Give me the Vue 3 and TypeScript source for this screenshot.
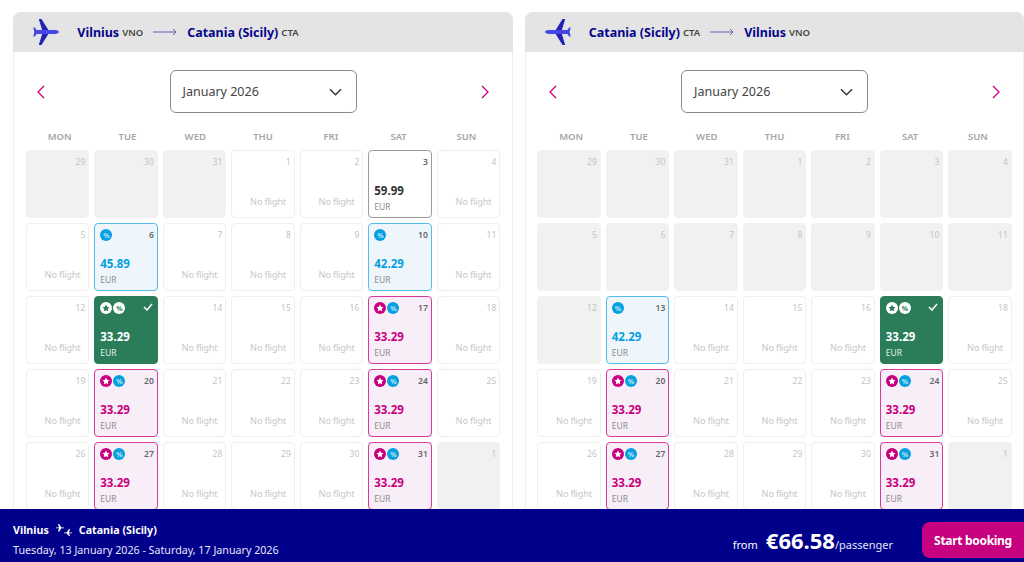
<template>
  <div class="page">
    <main class="panels">
      <section v-for="(panel, p) in panels" :key="p" class="panel">
        <header class="panel-head">
          <svg class="plane" :class="{ flip: panel.flip }" viewBox="0 0 28 28" width="28" height="28">
            <path d="M6.800 1h2.700l7 11.300v3.400L9.500 27H6.800l3.400-11.300v-3.400z" fill="#2222b8" />
            <path d="M27 14c0 1-2 1.900-4 1.900H4.600L2.800 18.500H1.300l1-4.500-1-4.500h1.500l1.800 2.600H23c2 0 4 .9 4 1.900z" fill="#4646e4" />
          </svg>
          <span class="city">{{ panel.from }}</span>
          <span class="code">{{ panel.fromCode }}</span>
          <svg class="route-arrow" viewBox="0 0 24 8" width="24" height="8">
            <path d="M0 4h23M20 1l3 3-3 3" fill="none" stroke="#5f5fb0" stroke-width="1" />
          </svg>
          <span class="city">{{ panel.to }}</span>
          <span class="code">{{ panel.toCode }}</span>
        </header>

        <div class="month-nav">
          <svg viewBox="0 0 8 14" width="8" height="14">
            <path d="M7 1L1 7l6 6" fill="none" stroke="#c6007e" stroke-width="1.300" />
          </svg>
          <div class="month-select">
            <span>January 2026</span>
            <svg viewBox="0 0 14 8" width="13" height="8">
              <path d="M1 1l6 6 6-6" fill="none" stroke="#333" stroke-width="1.500" />
            </svg>
          </div>
          <svg viewBox="0 0 8 14" width="8" height="14">
            <path d="M1 1l6 6-6 6" fill="none" stroke="#c6007e" stroke-width="1.300" />
          </svg>
        </div>

        <div class="weekdays">
          <span v-for="d in weekdays" :key="d">{{ d }}</span>
        </div>

        <div class="days">
          <div v-for="(cell, i) in panel.cells" :key="i" class="day" :class="cell.kind">
            <div class="day-top">
              <span class="badges">
                <span v-if="cell.star" class="badge star">
                  <svg viewBox="0 0 12 12" width="8" height="8">
                    <path d="M6 .8l1.600 3.400 3.700.5-2.700 2.600.7 3.700L6 9.200 2.700 11l.7-3.700L.7 4.700l3.700-.5z" fill="currentColor" />
                  </svg>
                </span>
                <span v-if="cell.pct" class="badge pct">%</span>
              </span>
              <svg v-if="cell.kind === 'selected'" class="tick" viewBox="0 0 10 8" width="10" height="8">
                <path d="M1 4l3 3 5-6" fill="none" stroke="#fff" stroke-width="1.500" />
              </svg>
              <span v-else class="num">{{ cell.day }}</span>
            </div>
            <template v-if="cell.price">
              <div class="price">{{ cell.price }}</div>
              <div class="cur">EUR</div>
            </template>
            <div v-else-if="cell.kind === 'empty'" class="none">No flight</div>
          </div>
        </div>
      </section>
    </main>

    <footer class="bar">
      <div class="trip">
        <div class="trip-route">
          <span>Vilnius</span>
          <svg viewBox="0 0 16 12" width="16" height="12">
            <path d="M0 3.500h3L2 0h1l2.500 3.500H8v.8H5.500L3 7.800H2l1-3.500H0zM16 8.500h-3l1-3.500h-1l-2.500 3.500H8v.8h2.500l2.500 2.700h1l-1-2.700h3z" fill="#fff" />
          </svg>
          <span>Catania (Sicily)</span>
        </div>
        <div class="trip-dates">Tuesday, 13 January 2026 - Saturday, 17 January 2026</div>
      </div>
      <div class="total">
        <span class="from">from</span>
        <span class="amount">€66.58</span>
        <span class="per">/passenger</span>
      </div>
      <button class="book">Start booking</button>
    </footer>
  </div>
</template>

<script setup lang="ts">
type Kind = 'past' | 'empty' | 'plain' | 'deal' | 'wizz' | 'selected'

interface Cell {
  day: number
  kind: Kind
  price?: string
  star?: boolean
  pct?: boolean
}

const weekdays = ['MON', 'TUE', 'WED', 'THU', 'FRI', 'SAT', 'SUN']

// december tail + january + first of february, 5 rows
const dayNumbers = [29, 30, 31, ...Array.from({ length: 31 }, (_, i) => i + 1), 1]

function buildCells(specials: Record<number, Partial<Cell>>, pastUntil: number): Cell[] {
  return dayNumbers.map((day, i) => {
    if (i === 34) return { day, kind: 'past' as Kind }
    const jan = i >= 3
    const special = jan ? specials[day] : undefined
    if (special) return { day, kind: 'empty' as Kind, ...special }
    if (!jan || day <= pastUntil) return { day, kind: 'past' as Kind }
    return { day, kind: 'empty' as Kind }
  })
}

const wizz: Partial<Cell> = { kind: 'wizz', price: '33.29', star: true, pct: true }
const selected: Partial<Cell> = { kind: 'selected', price: '33.29', star: true, pct: true }

const panels = [
  {
    from: 'Vilnius',
    fromCode: 'VNO',
    to: 'Catania (Sicily)',
    toCode: 'CTA',
    flip: false,
    cells: buildCells(
      {
        3: { kind: 'plain', price: '59.99' },
        6: { kind: 'deal', price: '45.89', pct: true },
        10: { kind: 'deal', price: '42.29', pct: true },
        13: selected,
        17: wizz,
        20: wizz,
        24: wizz,
        27: wizz,
        31: wizz,
      },
      0,
    ),
  },
  {
    from: 'Catania (Sicily)',
    fromCode: 'CTA',
    to: 'Vilnius',
    toCode: 'VNO',
    flip: true,
    cells: buildCells(
      {
        13: { kind: 'deal', price: '42.29', pct: true },
        17: selected,
        20: wizz,
        24: wizz,
        27: wizz,
        31: wizz,
      },
      12,
    ),
  },
]
</script>

<style>
html,
body {
  margin: 0;
  overflow: hidden;
}
</style>

<style scoped>
.page {
  height: 562px;
  display: flex;
  flex-direction: column;
  overflow: hidden;
  background: #fff;
  font-family: "Noto Sans", "Open Sans", sans-serif;
}
.panels {
  flex: 1;
  min-height: 0;
  overflow: hidden;
  display: flex;
  gap: 12px;
  padding: 12px 0 0 13.3px;
}
.panel {
  flex: 0 0 499.5px;
  box-sizing: border-box;
  height: 560px;
  border: 1px solid #eee;
  border-radius: 8px 8px 0 0;
}
.panel-head {
  height: 40px;
  margin: -1px -1px 0;
  padding-left: 19px;
  background: #e4e4e4;
  border-radius: 8px 8px 0 0;
  display: flex;
  align-items: center;
}
.plane {
  margin-right: 17px;
}
.plane.flip {
  transform: scaleX(-1);
}
.city {
  font-size: 12.5px;
  font-weight: 700;
  color: #06068c;
}
.code {
  margin-left: 3px;
  font-size: 9.5px;
  font-weight: 600;
  color: #444;
}
.route-arrow {
  margin: 0 10px;
}
.month-nav {
  height: 75px;
  padding: 0 23px;
  display: flex;
  align-items: center;
  justify-content: space-between;
}
.month-nav > svg {
  margin-top: 4px;
}
.month-select {
  box-sizing: border-box;
  width: 187px;
  height: 43px;
  margin-top: 4px;
  padding: 0 14px 0 12px;
  border: 1px solid #8a8a8a;
  border-radius: 6px;
  display: flex;
  align-items: center;
  justify-content: space-between;
  font-size: 12.5px;
  color: #444;
}
.weekdays,
.days {
  display: grid;
  grid-template-columns: repeat(7, 1fr);
  padding: 0 11.5px;
}
.weekdays {
  height: 23px;
  align-items: start;
  padding-top: 3px;
  box-sizing: border-box;
  text-align: center;
  font-size: 9.5px;
  font-weight: 600;
  color: #a5a5a5;
}
.days {
  grid-auto-rows: 68px;
  gap: 5px;
}
.day {
  box-sizing: border-box;
  display: flex;
  flex-direction: column;
  padding: 5px 3px 4px 5px;
  border: 1px solid #efefef;
  border-radius: 4px;
}
.day-top {
  display: flex;
  justify-content: space-between;
  align-items: flex-start;
  height: 12px;
}
.badges {
  display: flex;
  gap: 1px;
}
.badge {
  width: 12px;
  height: 12px;
  border-radius: 50%;
  display: flex;
  align-items: center;
  justify-content: center;
  font-size: 7px;
  font-weight: 700;
  line-height: 1;
}
.badge.star {
  background: #c6007e;
  color: #fff;
}
.badge.pct {
  background: #06a0e0;
  color: #bfe6f7;
}
.num {
  font-size: 8.5px;
  line-height: 11px;
  color: #c4c4c4;
}
.past {
  background: #f1f1f1;
  border-color: #f1f1f1;
}
.none {
  margin: auto 5px 5px 0;
  text-align: right;
  font-size: 9.2px;
  letter-spacing: -0.2px;
  color: #c8c8c8;
}
.price {
  margin-top: auto;
  font-size: 11.5px;
  font-weight: 700;
  line-height: 15px;
}
.cur {
  margin-top: 2px;
  font-size: 8.5px;
  line-height: 13px;
  color: #8c8c8c;
}
.plain {
  border-color: #9b9b9b;
}
.plain .num,
.deal .num,
.wizz .num {
  color: #666;
  font-weight: 600;
}
.plain .price {
  color: #333;
}
.deal {
  background: #eef6fb;
  border-color: #52bdea;
}
.deal .price {
  color: #06a0e0;
}
.wizz {
  background: #f8eef7;
  border-color: #d83a9c;
}
.wizz .price {
  color: #c6007e;
}
.selected {
  background: #2b7d5a;
  border-color: #2b7d5a;
}
.selected .price {
  color: #fff;
}
.selected .cur {
  color: #e3efe9;
}
.selected .badge {
  background: #fff;
  color: #2b7d5a;
}
.tick {
  margin: 1px 1px 0 0;
}
.bar {
  flex: 0 0 53px;
  box-sizing: border-box;
  display: flex;
  align-items: center;
  padding: 9px 0 0 13px;
  background: #00008b;
  color: #fff;
}
.trip {
  flex: 1;
  font-size: 10.7px;
}
.trip-route {
  display: flex;
  align-items: center;
  gap: 7px;
  font-weight: 700;
  line-height: 15px;
}
.trip-dates {
  margin-top: 5px;
  line-height: 15px;
  color: #e6e6fa;
}
.total {
  display: flex;
  align-items: baseline;
  margin-right: 29px;
}
.from {
  font-size: 11px;
  margin-right: 8px;
}
.amount {
  font-size: 22px;
  font-weight: 700;
}
.per {
  font-size: 11px;
  color: #e6e6fa;
}
.book {
  width: 102px;
  height: 36px;
  border: none;
  padding: 0;
  border-radius: 8px 0 0 8px;
  background: #c6007e;
  color: #fff;
  font-family: inherit;
  font-size: 12px;
  font-weight: 700;
  letter-spacing: -0.3px;
}
</style>
